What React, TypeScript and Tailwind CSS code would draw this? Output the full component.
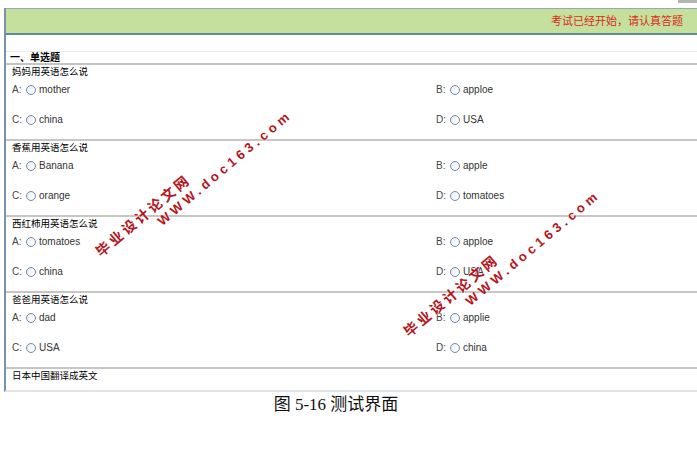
const questions = [
  { title: "妈妈用英语怎么说", options: ["mother", "apploe", "china", "USA"] },
  { title: "香蕉用英语怎么说", options: ["Banana", "apple", "orange", "tomatoes"] },
  { title: "西红柿用英语怎么说", options: ["tomatoes", "apploe", "china", "USA"] },
  { title: "爸爸用英语怎么说", options: ["dad", "applie", "USA", "china"] },
];

const letters = ["A", "B", "C", "D"];

function Radio() {
  return (
    <span className="inline-block h-[10px] w-[10px] shrink-0 rounded-full border border-[#6f89a6] bg-gradient-to-br from-[#e9edf2] to-white" />
  );
}

function Option({ letter, text }: { letter: string; text: string }) {
  return (
    <div className="flex h-[14px] items-center text-[10px] leading-[14px] text-[#333]">
      <span className="w-[14px] text-[#444]">{letter}:</span>
      <Radio />
      <span className="ml-[3px]">{text}</span>
    </div>
  );
}

function Watermark({ x, y }: { x: number; y: number }) {
  const base =
    "absolute -translate-x-1/2 -translate-y-1/2 -rotate-[40deg] whitespace-nowrap font-bold text-[#b3161c] [text-shadow:0_0_2px_#fff,0_0_1px_#fff]";
  return (
    <>
      <div
        className={`${base} text-[14px] tracking-[3px]`}
        style={{ left: x, top: y, fontFamily: '"Noto Sans CJK SC", sans-serif' }}
      >
        毕业设计论文网
      </div>
      <div
        className={`${base} text-[13px] tracking-[4px]`}
        style={{ left: x + 82, top: y - 47, fontFamily: '"Liberation Sans", Arial, sans-serif' }}
      >
        WWW.doc163.com
      </div>
    </>
  );
}

export default function App() {
  return (
    <div
      className="relative h-[451px] w-[697px] overflow-hidden bg-white"
      style={{ fontFamily: '"Liberation Sans", Arial, "Noto Sans CJK SC", sans-serif' }}
    >
      <div className="flex h-[8px] justify-end">
        <div className="h-[3px] w-[19px] bg-[#b4b4b4]" />
      </div>

      <div className="ml-[4px] h-[384px] overflow-hidden border-b-2 border-l-2 border-[#e1e5e7] border-l-[#7592b0]">
        <div className="flex h-[27px] items-center justify-end border-t border-b-2 border-t-[#94a9b6] border-b-[#5f8c94] bg-[#c4e09c] pr-[14px] text-[11px] text-[#da2a1c]">
          考试已经开始，请认真答题
        </div>

        <div className="h-[16px]" />

        <div className="flex h-[14px] items-center border-t border-b-2 border-t-[#ebebeb] border-b-[#c4c4c4] pl-[4px] text-[10px] font-bold leading-none text-black">
          一、单选题
        </div>

        {questions.map((q) => (
          <div key={q.title} className="h-[76px] border-b-2 border-[#c6c6c4]">
            <div className="h-[14px] pl-[6px] text-[9.5px] leading-[14px] text-black">{q.title}</div>
            <div className="mt-[4px] grid grid-cols-[424px_1fr] gap-y-[16px] pl-[6px]">
              {q.options.map((o, i) => (
                <Option key={i} letter={letters[i]} text={o} />
              ))}
            </div>
          </div>
        ))}

        <div className="h-[20px]">
          <div className="h-[14px] pl-[6px] text-[9.5px] leading-[14px] text-black">日本中国翻译成英文</div>
          <div className="mt-[3px] grid grid-cols-[424px_1fr] pl-[6px]">
            <div className="pl-[20px]">
              <Radio />
            </div>
            <div className="pl-[13px]">
              <Radio />
            </div>
          </div>
        </div>
      </div>

      <div
        className="mt-[3px] pr-[25px] text-center text-[17px] leading-[20px] text-[#111]"
        style={{ fontFamily: '"Liberation Serif", "Noto Sans CJK SC", serif' }}
      >
        图 5-16 测试界面
      </div>

      <Watermark x={143} y={215} />
      <Watermark x={451} y={295} />
    </div>
  );
}
